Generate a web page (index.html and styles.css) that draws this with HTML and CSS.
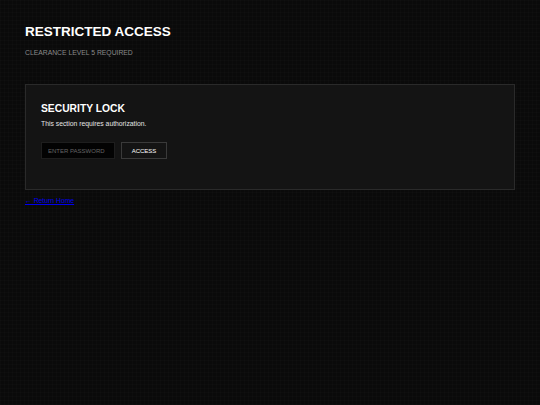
FILE: index.html
```html
<!DOCTYPE html>
<html>
<head>
<meta charset="utf-8">
<link rel="stylesheet" href="styles.css">
</head>
<body>
<div class="page">
  <header class="header">
    <h1 class="title">RESTRICTED ACCESS</h1>
    <p class="subtitle">CLEARANCE LEVEL 5 REQUIRED</p>
  </header>
  <section class="card">
    <h2 class="card-title">SECURITY LOCK</h2>
    <p class="card-text">This section requires authorization.</p>
    <form class="lock-form">
      <input class="password" type="password" placeholder="ENTER PASSWORD">
      <button class="access" type="button">ACCESS</button>
    </form>
  </section>
  <p class="back-row"><a class="back" href="#">← Return Home</a></p>
</div>
</body>
</html>
```

FILE: styles.css
```css
html, body {
  margin: 0;
  padding: 0;
}
body {
  background-color: #0a0a0a;
  background-image:
    linear-gradient(rgba(255,255,255,0.01) 1px, transparent 1px),
    linear-gradient(90deg, rgba(255,255,255,0.01) 1px, transparent 1px);
  background-size: 4px 4px;
  font-family: "Liberation Sans", Arial, sans-serif;
  color: #e0e0e0;
  min-height: 405px;
}
.page {
  padding: 24px 25px;
}
.header {
  margin-bottom: 27px;
}
.title {
  margin: 0;
  font-size: 13.5px;
  font-weight: bold;
  color: #ffffff;
  line-height: 16px;
}
.subtitle {
  margin: 8px 0 0;
  font-size: 6.8px;
  color: #8a8a8a;
  line-height: 9px;
}
.card {
  background: #141414;
  border: 1px solid #2a2a2a;
  padding: 17px 15px 30px;
}
.card-title {
  margin: 0;
  font-size: 10.3px;
  font-weight: bold;
  color: #ffffff;
  line-height: 13px;
}
.card-text {
  margin: 4px 0 0;
  font-size: 6.8px;
  line-height: 9px;
  color: #e4e4e4;
}
.lock-form {
  display: flex;
  gap: 6px;
  margin-top: 14px;
}
.password {
  width: 74px;
  height: 17px;
  box-sizing: border-box;
  background: #030303;
  border: 1px solid #1e1e1e;
  color: #ccc;
  font-family: "Liberation Sans", Arial, sans-serif;
  font-size: 6px;
  padding: 0 6px;
  outline: none;
}
.password::placeholder {
  color: #666;
}
.access {
  width: 46px;
  height: 17px;
  box-sizing: border-box;
  background: #141414;
  border: 1px solid #3a3a3a;
  color: #ffffff;
  font-family: "Liberation Sans", Arial, sans-serif;
  font-size: 6px;
  padding: 0;
}
.back-row {
  margin: 6px 0 0;
  font-size: 6.8px;
  line-height: 9px;
}
.back {
  color: #0000ee;
}
```
